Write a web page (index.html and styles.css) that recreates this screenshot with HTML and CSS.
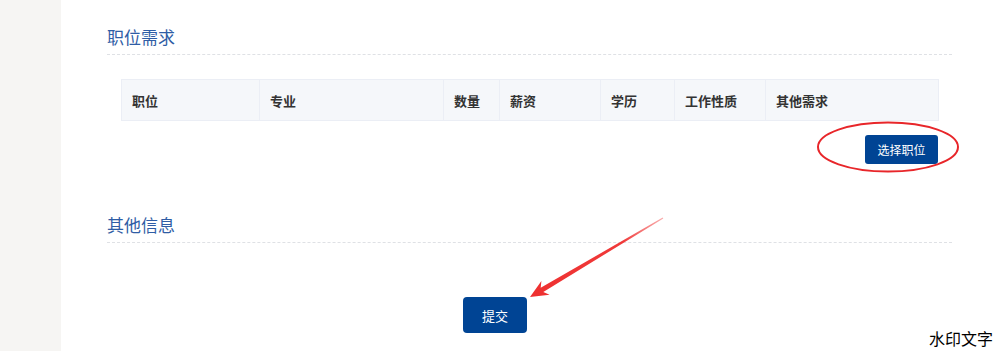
FILE: index.html
```html
<!DOCTYPE html>
<html lang="zh">
<head>
<meta charset="utf-8">
<link rel="stylesheet" href="styles.css">
</head>
<body>
<div class="page">
  <aside class="side"></aside>
  <main class="main">
    <section class="section">
      <h2 class="section-title">职位需求</h2>
      <table class="grid">
        <thead>
          <tr>
            <th class="c1">职位</th>
            <th class="c2">专业</th>
            <th class="c3">数量</th>
            <th class="c4">薪资</th>
            <th class="c5">学历</th>
            <th class="c6">工作性质</th>
            <th class="c7">其他需求</th>
          </tr>
        </thead>
      </table>
      <div class="row-actions">
        <button class="btn btn-select">选择职位</button>
      </div>
    </section>
    <section class="section section-other">
      <h2 class="section-title">其他信息</h2>
    </section>
    <div class="submit-row">
      <button class="btn btn-submit">提交</button>
    </div>
  </main>
</div>
<svg class="annot" width="1000" height="351" viewBox="0 0 1000 351">
  <defs>
    <linearGradient id="ag" x1="663" y1="218" x2="530" y2="297" gradientUnits="userSpaceOnUse">
      <stop offset="0" stop-color="#f35a5a" stop-opacity="0.5"/>
      <stop offset="0.3" stop-color="#f03a3a"/>
      <stop offset="1" stop-color="#ee3030"/>
    </linearGradient>
  </defs>
  <ellipse cx="888" cy="147" rx="70" ry="24.5" fill="none" stroke="#e8262a" stroke-width="2"/>
  <polygon points="530,297 549.6,294.7 543.3,292.0 663.3,218.4 662.7,217.6 540.7,287.7 541.4,280.9" fill="url(#ag)"/>
</svg>
<div class="watermark">水印文字</div>
</body>
</html>
```

FILE: styles.css
```css
html, body {
  margin: 0;
  padding: 0;
  height: 351px;
  overflow: hidden;
  background: #ffffff;
  font-family: "Noto Sans CJK SC", "Noto Sans", sans-serif;
}

.page {
  display: flex;
  height: 351px;
}

.side {
  width: 61px;
  flex: none;
  background: #f6f5f3;
}

.main {
  flex: 1;
  padding: 0 0 0 46px;
  background: #ffffff;
}

.section {
  width: 845px;
}

.section-title {
  margin: 25px 0 0;
  padding-bottom: 5px;
  font-size: 17px;
  line-height: 24px;
  font-weight: 400;
  color: #2f5da5;
  border-bottom: 1px dashed #dfe1e5;
}

.section-other .section-title {
  margin-top: 49px;
}

.grid {
  margin: 24px 14px 0;
  width: 817px;
  border-collapse: collapse;
  table-layout: fixed;
}

.grid th {
  box-sizing: border-box;
  height: 41px;
  padding: 0 0 0 10px;
  text-align: left;
  font-size: 13px;
  font-weight: 700;
  color: #333333;
  background: #f5f7fa;
  border: 1px solid #ebeef5;
}

.c1 { width: 138px; }
.c2 { width: 184px; }
.c3 { width: 56px; }
.c4 { width: 101px; }
.c5 { width: 74px; }
.c6 { width: 91px; }
.c7 { width: 173px; }

.row-actions {
  display: flex;
  justify-content: flex-end;
  padding: 14px 14px 0 0;
}

.btn {
  border: 0;
  border-radius: 3px;
  background: #004494;
  color: #ffffff;
  font-family: "Noto Sans CJK SC", "Noto Sans", sans-serif;
  cursor: pointer;
}

.btn-select {
  width: 73px;
  height: 29px;
  font-size: 12px;
  padding: 0;
}

.submit-row {
  display: flex;
  padding: 54px 0 0 356px;
}

.btn-submit {
  width: 64px;
  height: 36px;
  font-size: 13px;
  padding: 0;
  border-radius: 4px;
}

.annot {
  position: absolute;
  left: 0;
  top: 0;
  pointer-events: none;
}

.watermark {
  position: absolute;
  right: 7px;
  bottom: 3px;
  font-size: 16px;
  line-height: 20px;
  color: #000000;
  font-family: "Noto Sans CJK SC", sans-serif;
}
```
